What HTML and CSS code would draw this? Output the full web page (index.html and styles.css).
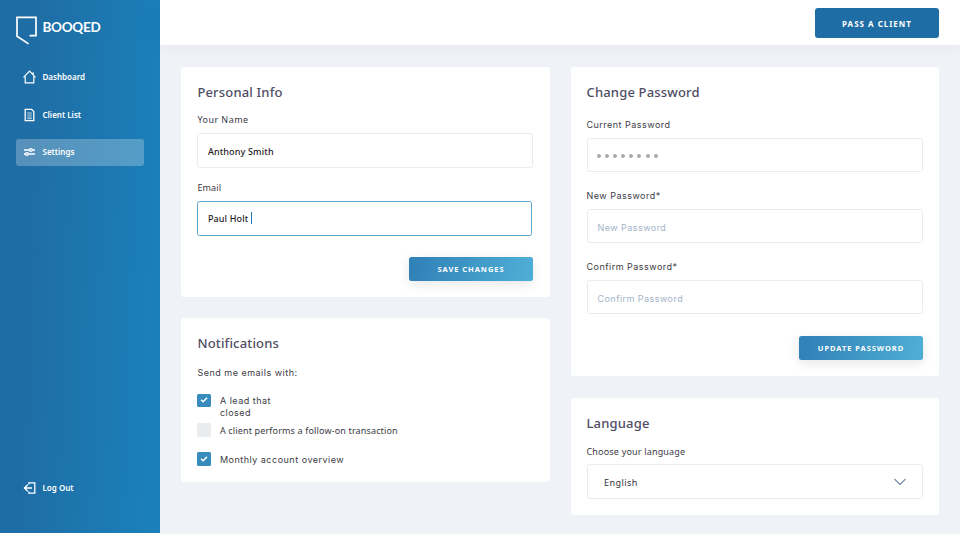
FILE: index.html
```html
<!DOCTYPE html>
<html lang="en">
<head>
<meta charset="utf-8">
<title>Booqed Settings</title>
<link rel="stylesheet" href="styles.css">
</head>
<body>
<div class="app">
  <aside class="sidebar">
    <div class="brand">
      <svg width="21" height="30" viewBox="0 0 21 30" fill="none" stroke="#fff" stroke-width="1.7"><path d="M13.5 19.7H20V1.3H1V20.3L12.6 27.9"/></svg>
      <span class="brand-name">BOOQED</span>
    </div>
    <nav class="nav">
      <a class="nav-item">
        <svg width="13" height="14" viewBox="0 0 13 14" fill="none" stroke="#fff" stroke-width="1.2"><path d="M2.2 6.5V12.8H10.8V6.5M.5 7.3L6.5 1.2L12.5 7.3M10.2 4.7V2.2"/></svg>
        <span>Dashboard</span>
      </a>
      <a class="nav-item clients">
        <svg width="13" height="14" viewBox="0 0 13 14" fill="none" stroke="#fff" stroke-width="1.3"><path d="M2.2 1.3H8.6L10.8 3.5V12.7H2.2Z"/><path d="M4.2 5H8.8M4.2 7H8.8M4.2 9H8.8M4.2 10.7H8.8" stroke-width=".9" opacity=".8"/></svg>
        <span>Client List</span>
      </a>
      <a class="nav-item active">
        <svg width="13" height="14" viewBox="0 0 13 14" fill="none" stroke="#fff" stroke-width="1.4"><path d="M1 5H6.3M9.5 5H12M1 9H2.3M5.5 9H12"/><circle cx="7.9" cy="5" r="1.4"/><circle cx="3.9" cy="9" r="1.4"/></svg>
        <span>Settings</span>
      </a>
    </nav>
    <a class="nav-item logout">
      <svg width="13" height="14" viewBox="0 0 13 14" fill="none" stroke="#fff" stroke-width="1.3"><path d="M5.8 3.5V1.9H11.8V12.1H5.8V10.5M9 7H1.4M4.7 3.7L1.4 7L4.7 10.3"/></svg>
      <span>Log Out</span>
    </a>
  </aside>
  <div class="page">
    <header class="topbar"><button class="btn-pass">PASS A CLIENT</button></header>
    <main class="content">
      <div class="column left">
        <section class="card personal">
          <h2>Personal Info</h2>
          <label class="label name-label">Your Name</label>
          <div class="field value name-value">Anthony Smith</div>
          <label class="label email-label">Email</label>
          <div class="field value focused">Paul Holt<span class="caret"></span></div>
          <button class="btn save">SAVE CHANGES</button>
        </section>
        <section class="card notifications">
          <h2>Notifications</h2>
          <p class="label intro">Send me emails with:</p>
          <div class="option first">
            <span class="box checked"><svg width="8" height="6" viewBox="0 0 8 6" fill="none" stroke="#fff" stroke-width="1.5"><path d="M1 2.7L3.1 4.7L7 .9"/></svg></span>
            <span class="option-text">A lead that<br>closed</span>
          </div>
          <div class="option second">
            <span class="box"></span>
            <span class="option-text plain">A client performs a follow-on transaction</span>
          </div>
          <div class="option third">
            <span class="box checked"><svg width="8" height="6" viewBox="0 0 8 6" fill="none" stroke="#fff" stroke-width="1.5"><path d="M1 2.7L3.1 4.7L7 .9"/></svg></span>
            <span class="option-text">Monthly account overview</span>
          </div>
        </section>
      </div>
      <div class="column">
        <section class="card password">
          <h2>Change Password</h2>
          <label class="label current">Current Password</label>
          <div class="field dots"><i></i><i></i><i></i><i></i><i></i><i></i><i></i><i></i></div>
          <label class="label">New Password*</label>
          <div class="field placeholder">New Password</div>
          <label class="label">Confirm Password*</label>
          <div class="field placeholder">Confirm Password</div>
          <button class="btn update">UPDATE PASSWORD</button>
        </section>
        <section class="card language">
          <h2>Language</h2>
          <label class="label choose">Choose your language</label>
          <div class="field select"><span>English</span>
            <svg width="12" height="8" viewBox="0 0 12 8" fill="none" stroke="#7c93ac" stroke-width="1.3"><path d="M.5 1L6 6.5L11.5 1"/></svg>
          </div>
        </section>
      </div>
    </main>
  </div>
</div>
</body>
</html>
```

FILE: styles.css
```css
* { box-sizing: border-box; }
body {
  margin: 0;
  font-family: "Noto Sans", sans-serif;
  color: #4f4d64;
  background: #fff;
}
h2, p { margin: 0; }
button { border: 0; padding: 0; font-family: inherit; color: #fff; }
svg { display: block; flex: none; }

.app { display: flex; width: 960px; height: 534px; overflow: hidden; }

.sidebar {
  display: flex;
  flex-direction: column;
  width: 160px;
  height: 533px;
  padding: 16px 16px 32px;
  background: linear-gradient(92deg, #1f6da5 20%, #1b80b9 95%);
}
.brand { display: flex; gap: 5.5px; height: 30px; }
.brand-name {
  height: 22px;
  font: 700 13.5px/22px Lato, sans-serif;
  letter-spacing: -0.3px;
  color: #fff;
}
.nav { display: flex; flex-direction: column; gap: 11px; margin-top: 18px; }
.nav-item {
  display: flex;
  align-items: center;
  gap: 6.5px;
  height: 26.5px;
  padding-left: 7px;
  border-radius: 3px;
  font-size: 8px;
  font-weight: 600;
  line-height: 12px;
  color: #fff;
}
.nav-item span { margin-top: -1px; }
.nav-item.clients span { margin-top: 0.5px; }
.active { background: rgba(255, 255, 255, 0.25); }
.logout { margin-top: auto; }
.logout span { margin-top: 0; }

.page { display: flex; flex-direction: column; flex: 1; background: #eff2f7; }
.topbar {
  display: flex;
  justify-content: flex-end;
  height: 45px;
  padding: 8px 21px 0 0;
  background: #fff;
  box-shadow: 0 2px 18px rgba(0, 0, 0, 0.045);
}
.btn-pass {
  width: 124px;
  height: 29.5px;
  padding-top: 1px;
  border-radius: 3px;
  background: #1f6da5;
  font-size: 8px;
  font-weight: 700;
  letter-spacing: 1px;
}

.content { display: flex; gap: 21px; padding: 22px 21px 0; }
.column { display: flex; flex-direction: column; gap: 21.5px; width: 368.5px; }
.left { gap: 21px; }
.card {
  display: flex;
  flex-direction: column;
  padding: 15px 16px 16px;
  border-radius: 3px;
  background: #fff;
}
.personal { height: 230px; }
.notifications { height: 164px; }
.password { height: 309px; }
.language { height: 117.5px; }
.left .card { padding-left: 16.4px; }

h2 { height: 20px; font-size: 13px; font-weight: 500; line-height: 20px; letter-spacing: 0.17px; white-space: nowrap; }
.label {
  height: 16px;
  margin: 15.5px 0 5px;
  font: 400 9px/16px Inter, sans-serif;
  letter-spacing: 0.48px;
  color: #3b3b45;
}
.name-label { margin-top: 10px; font-family: "Noto Sans", sans-serif; letter-spacing: 0.45px; }
.email-label { margin-top: 12.5px; font-family: "Noto Sans", sans-serif; letter-spacing: 0.15px; }
.current { margin-top: 14.5px; }
.choose { margin-top: 11.5px; margin-bottom: 4px; font-family: "Noto Sans", sans-serif; letter-spacing: 0.18px; }
.intro { margin: 11.5px 0 13px; letter-spacing: 0.5px; }

.field {
  display: flex;
  align-items: center;
  height: 34.5px;
  padding-left: 10px;
  border: 1px solid #e8ecf1;
  border-radius: 2.5px;
  font-size: 9px;
}
.value { padding-left: 9.5px; color: #1f2026; font-weight: 500; letter-spacing: 0.15px; }
.name-value { width: 336px; padding-top: 2px; }
.focused { width: 335px; border-color: #5ea8cf; }
.caret { width: 1px; height: 12px; margin-left: 2.5px; background: #1f78b4; }
.placeholder { padding-top: 3px; font-family: Inter, sans-serif; letter-spacing: 0.45px; color: #a4b4c8; }
.dots { gap: 4.1px; padding: 2px 0 0 9.5px; }
.dots i { width: 4px; height: 4px; border-radius: 50%; background: #aaa; }
.select { justify-content: space-between; padding: 1.5px 16px 0 16.5px; color: #30303a; letter-spacing: 0.45px; }

.btn {
  align-self: flex-end;
  width: 124px;
  height: 24px;
  margin-top: 21.5px;
  border-radius: 2.5px;
  background: linear-gradient(100deg, #3182b7 5%, #4eadd5 95%);
  box-shadow: 0 3px 12px rgba(0, 0, 0, 0.1);
  font-size: 7.5px;
  font-weight: 700;
  letter-spacing: 0.95px;
}
.save { margin-right: 0.5px; }
.update { padding-top: 1px; }

.option { display: flex; gap: 9px; height: 13.5px; }
.second { margin-top: 16px; }
.third { margin-top: 15.5px; }
.box {
  display: flex;
  align-items: center;
  justify-content: center;
  width: 13.5px;
  height: 13.5px;
  border-radius: 1.5px;
  background: #e9ecef;
}
.checked { background: #378bbd; }
.option-text {
  padding-top: 1px;
  font: 400 9px/12px Inter, sans-serif;
  letter-spacing: 0.5px;
  color: #3b3b45;
}
.second .option-text, .third .option-text { padding-top: 1.8px; }
.plain { font-family: "Noto Sans", sans-serif; letter-spacing: 0.15px; }
```
